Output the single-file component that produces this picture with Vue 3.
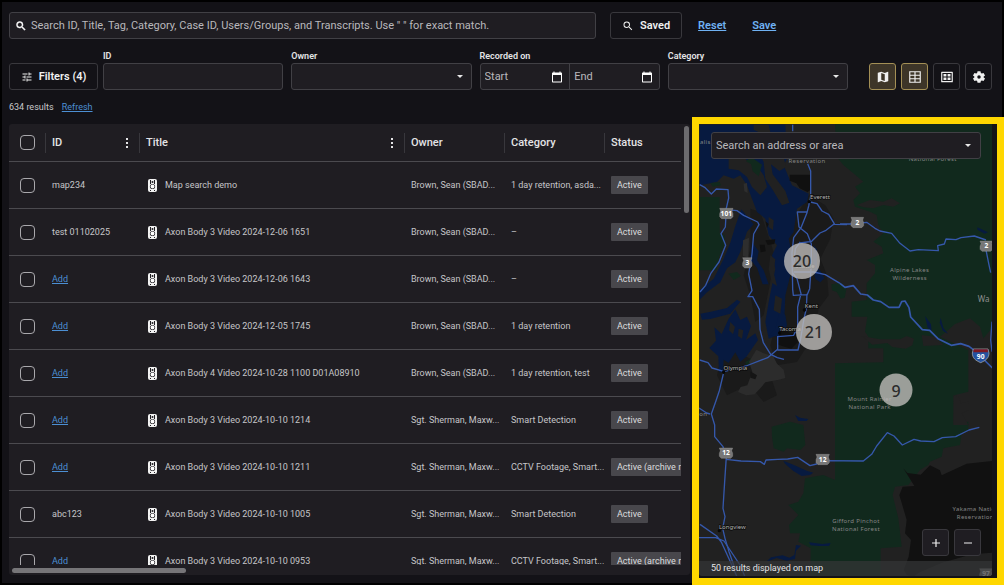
<script setup>
import { ref } from 'vue'

const query = ref('')
const allSelected = ref(false)

const rows = ref([
  { id: 'map234', title: 'Map search demo', owner: 'Brown, Sean (SBAD...', category: '1 day retention, asda...', status: 'Active' },
  { id: 'test 01102025', title: 'Axon Body 3 Video 2024-12-06 1651', owner: 'Brown, Sean (SBAD...', category: '–', status: 'Active' },
  { id: '', title: 'Axon Body 3 Video 2024-12-06 1643', owner: 'Brown, Sean (SBAD...', category: '–', status: 'Active' },
  { id: '', title: 'Axon Body 3 Video 2024-12-05 1745', owner: 'Brown, Sean (SBAD...', category: '1 day retention', status: 'Active' },
  { id: '', title: 'Axon Body 4 Video 2024-10-28 1100 D01A08910', owner: 'Brown, Sean (SBAD...', category: '1 day retention, test', status: 'Active' },
  { id: '', title: 'Axon Body 3 Video 2024-10-10 1214', owner: 'Sgt. Sherman, Maxw...', category: 'Smart Detection', status: 'Active' },
  { id: '', title: 'Axon Body 3 Video 2024-10-10 1211', owner: 'Sgt. Sherman, Maxw...', category: 'CCTV Footage, Smart...', status: 'Active (archive r...' },
  { id: 'abc123', title: 'Axon Body 3 Video 2024-10-10 1005', owner: 'Sgt. Sherman, Maxw...', category: 'Smart Detection', status: 'Active' },
  { id: '', title: 'Axon Body 3 Video 2024-10-10 0953', owner: 'Sgt. Sherman, Maxw...', category: 'CCTV Footage, Smart...', status: 'Active (archive r...' }
])

// centre of each cluster on the map, in px
const clusters = [
  { count: 20, x: 103, y: 137, size: 36 },
  { count: 21, x: 115, y: 208, size: 36 },
  { count: 9, x: 197, y: 266, size: 33 }
]

// x, y are in the units of the map's viewBox
const shields = [
  { n: '101', x: 109, y: 295, w: 40 },
  { n: '2', x: 502, y: 322, w: 38 },
  { n: '2', x: 889, y: 393, w: 38 },
  { n: '3', x: 172, y: 443, w: 28 },
  { n: '12', x: 108, y: 1014, w: 40 },
  { n: '12', x: 398, y: 1033, w: 40 },
  { n: '97', x: 888, y: 1376, w: 38 }
]

const places = [
  { t: 'alis', x: 46, y: 88, park: true },
  { t: 'Reservation', x: 351, y: 144, park: true },
  { t: 'National Forest', x: 728, y: 137, park: true },
  { t: 'Everett', x: 390, y: 253 },
  { t: 'Seattle', x: 345, y: 458 },
  { t: 'Alpine Lakes', x: 659, y: 470, park: true },
  { t: 'Wilderness', x: 659, y: 494, park: true },
  { t: 'Kent', x: 364, y: 578 },
  { t: 'Tacoma', x: 300, y: 647 },
  { t: 'Olympia', x: 136, y: 765 },
  { t: 'Mount Rainier', x: 539, y: 857, park: true },
  { t: 'National Park', x: 539, y: 881, park: true },
  { t: 'on', x: 40, y: 903, park: true },
  { t: 'Longview', x: 127, y: 1242 },
  { t: 'Gifford Pinchot', x: 498, y: 1224, park: true },
  { t: 'National Forest', x: 498, y: 1248, park: true },
  { t: 'Yakama Nation', x: 858, y: 1187, park: true },
  { t: 'Reservation', x: 856, y: 1211, park: true }
]

function toggleAll() {
  rows.value.forEach(r => (r.checked = allSelected.value))
}
</script>

<template>
  <div class="screen">
    <header class="search-row">
      <div class="box search-box">
        <svg class="icon" viewBox="0 0 24 24"><path stroke="currentColor" d="M15.5 14h-.79l-.28-.27A6.471 6.471 0 0 0 16 9.5 6.5 6.5 0 1 0 9.5 16c1.61 0 3.09-.59 4.23-1.57l.27.28v.79l5 4.99L20.49 19l-4.99-5zm-6 0C7.01 14 5 11.99 5 9.5S7.01 5 9.5 5 14 7.01 14 9.5 11.99 14 9.5 14z" /></svg>
        <input v-model="query" type="text" aria-label="Search evidence" placeholder="Search ID, Title, Tag, Category, Case ID, Users/Groups, and Transcripts. Use &quot; &quot; for exact match." />
      </div>
      <button class="btn saved">
        <svg class="icon" viewBox="0 0 24 24"><path d="M15.5 14h-.79l-.28-.27A6.471 6.471 0 0 0 16 9.5 6.5 6.5 0 1 0 9.5 16c1.61 0 3.09-.59 4.23-1.57l.27.28v.79l5 4.99L20.49 19l-4.99-5zm-6 0C7.01 14 5 11.99 5 9.5S7.01 5 9.5 5 14 7.01 14 9.5 11.99 14 9.5 14z" /></svg>
        Saved
      </button>
      <nav class="links">
        <a href="#reset">Reset</a>
        <a href="#save">Save</a>
      </nav>
    </header>

    <section class="filter-row">
      <button class="btn filters">
        <svg class="icon" viewBox="0 0 24 24"><path d="M3 17v2h6v-2H3zM3 5v2h10V5H3zm10 16v-2h8v-2h-8v-2h-2v6h2zM7 9v2H3v2h4v2h2V9H7zm14 4v-2H11v2h10zm-6-4h2V7h4V5h-4V3h-2v6z" /></svg>
        Filters (4)
      </button>
      <div class="fields">
        <div class="field">
          <label for="f-id">ID</label>
          <div class="box"><input id="f-id" type="text" /></div>
        </div>
        <div class="field">
          <label for="f-owner">Owner</label>
          <div class="box">
            <select id="f-owner"><option></option></select>
            <span class="caret"></span>
          </div>
        </div>
        <div class="field">
          <label for="f-start">Recorded on</label>
          <div class="box dates">
            <div class="date">
              <input id="f-start" type="text" placeholder="Start" />
              <svg class="icon" viewBox="0 0 24 24"><path d="M20 3h-1V1h-2v2H7V1H5v2H4c-1.1 0-2 .9-2 2v16c0 1.1.9 2 2 2h16c1.1 0 2-.9 2-2V5c0-1.1-.9-2-2-2zm0 18H4V8h16v13z" /></svg>
            </div>
            <div class="date">
              <input type="text" aria-label="Recorded on, end" placeholder="End" />
              <svg class="icon" viewBox="0 0 24 24"><path d="M20 3h-1V1h-2v2H7V1H5v2H4c-1.1 0-2 .9-2 2v16c0 1.1.9 2 2 2h16c1.1 0 2-.9 2-2V5c0-1.1-.9-2-2-2zm0 18H4V8h16v13z" /></svg>
            </div>
          </div>
        </div>
        <div class="field">
          <label for="f-category">Category</label>
          <div class="box">
            <select id="f-category"><option></option></select>
            <span class="caret"></span>
          </div>
        </div>
      </div>
      <div class="views">
        <button class="btn square on" aria-label="Map view">
          <svg class="icon big" viewBox="0 0 24 24"><path d="M20.5 3l-.16.03L15 5.1 9 3 3.36 4.9c-.21.07-.36.25-.36.48V20.5c0 .28.22.5.5.5l.16-.03L9 18.9l6 2.1 5.64-1.9c.21-.07.36-.25.36-.48V3.5c0-.28-.22-.5-.5-.5zM15 19l-6-2.11V5l6 2.11V19z" /></svg>
        </button>
        <button class="btn square on" aria-label="Table view">
          <svg class="icon big" viewBox="0 0 24 24" fill="none" stroke="currentColor" stroke-width="2"><path d="M3 3h18v18H3zM3 9h18M3 15h18M12 3v18" /></svg>
        </button>
        <button class="btn square" aria-label="Gallery view">
          <svg class="icon big" viewBox="0 0 24 24"><path d="M3 3h18a1 1 0 0 1 1 1v16a1 1 0 0 1-1 1H3a1 1 0 0 1-1-1V4a1 1 0 0 1 1-1zm1 2v14h16V5zM6 7h5v4H6zM13 7h5v4h-5zM6 13h5v4H6zM13 13h5v4h-5z" fill-rule="evenodd" /></svg>
        </button>
        <button class="btn square" aria-label="Settings">
          <svg class="icon big" viewBox="0 0 24 24"><path fill-rule="evenodd" d="M9.5 2h5l.7 3 1.6 1 3-1 2.5 4.3-2.3 2v1.4l2.300 2L19.800 19l-3-1-1.600 1-.7 3h-5l-.7-3-1.600-1-3 1-2.500-4.300 2.300-2v-1.400l-2.300-2L4.200 5l3 1 1.600-1zM12 9a3 3 0 1 0 0 6 3 3 0 0 0 0-6z" /></svg>
        </button>
      </div>
    </section>

    <p class="summary">634 results <a href="#refresh">Refresh</a></p>

    <main class="main">
      <section class="panel">
        <div class="scroller">
          <table>
            <colgroup>
              <col class="c-check" /><col class="c-id" /><col /><col class="c-owner" /><col class="c-category" /><col class="c-status" />
            </colgroup>
            <thead>
              <tr>
                <th><input v-model="allSelected" type="checkbox" aria-label="Select all" @change="toggleAll" /></th>
                <th><div class="head">ID <button class="kebab" aria-label="ID column menu"><i></i><i></i><i></i></button></div></th>
                <th><div class="head">Title <button class="kebab" aria-label="Title column menu"><i></i><i></i><i></i></button></div></th>
                <th><div class="head">Owner</div></th>
                <th><div class="head">Category</div></th>
                <th><div class="head">Status</div></th>
              </tr>
            </thead>
            <tbody>
              <tr v-for="row in rows" :key="row.title">
                <td><input v-model="row.checked" type="checkbox" :aria-label="'Select ' + row.title" /></td>
                <td>
                  <template v-if="row.id">{{ row.id }}</template>
                  <a v-else href="#add">Add</a>
                </td>
                <td>
                  <div class="title">
                    <svg class="device" viewBox="0 0 9 13">
                      <rect width="9" height="13" rx="2" fill="#f2f2f2" />
                      <path d="M2.5 1v4M6.5 1v4" stroke="#1f1d22" />
                      <circle cx="4.5" cy="3" r="1" fill="#1f1d22" />
                      <circle cx="4.5" cy="7.5" r="2.600" fill="#1f1d22" />
                      <circle cx="4.5" cy="7.5" r="1.900" fill="#fff" />
                      <path d="M2.5 11v1M6.5 11v1" stroke="#1f1d22" />
                    </svg>
                    {{ row.title }}
                  </div>
                </td>
                <td>{{ row.owner }}</td>
                <td>{{ row.category }}</td>
                <td><span class="tag">{{ row.status }}</span></td>
              </tr>
            </tbody>
          </table>
          <div class="v-track"><div class="v-thumb"></div></div>
        </div>
        <div class="h-track"><div class="h-thumb"></div></div>
      </section>

      <section class="map-frame">
        <div class="map">
          <svg class="tiles" viewBox="27 27 879 1356" preserveAspectRatio="xMinYMin slice">
            <rect x="27" y="27" width="2000" height="2000" fill="#212121" />

            <!-- west side: sound, peninsula and cities -->
            <g transform="translate(21 21)">
              <path fill="#1a1a1a" d="M335 220l50 30 25 40-10 60-30 60 20 50 5 60-30 40-10 60-30 60-25 40-60 10-20-60 15-60 30-60-10-80 0-120zM160 260l30 10 20 60 20 60-10 90-20 100-25 20-15-80-20-60 20-80z" />
              <path fill="#1a1a1a" d="M80 670l80 40 60 50 20 60-40 20-25-30-45-10-40 20-30-60z" />
              <path fill="#071a40" d="M8 8h257l5 102-10 20 25 60 50 25-5 25-30 20-10 70-15 20 15 70-15 60-10 40-3 70-22 50-25 10-10-50 10-60 10-50 10-50-10-40 15-30-25-30-10-50-25-20-15-40-15-40-20-30-20 10-30-10-20 20-52 10z" />
              <g fill="#071a40">
                <path d="M133 262l37 45-20 22-20 60-15 32-25 18-20 42-40 30-22 22v-28l42-35 30-60 20-48 15-50z" />
                <path d="M10 575l28-5 52-12 30-25 10 6-30 36-60 16-25 2zM165 360l20 28-5 27 20 30 15 42-18 0-17-50-18-22z" />
                <path d="M95 590l20-28 15 32 20-10 12 28-15 42 28-20 8 20-35 50-18 15-15-28-20 32-15-10-2 38-12 0-2-48-27-25 20-22-5-40 22 20zM215 640l20-20 15-60 15 20 5 30-20 35z" />
                <path d="M350 370l10 12 0 55 12 12 10 20-12 12-15-10-8-40z" />
              </g>
              <g fill="#212121">
                <path d="M60 75l30-5 20 20-10 20-30-5zM95 110l35-15 20 20 25 10 25 35 10 35-20 25-25-25-15-30-25-20-30-5z" />
                <path d="M170 8h45l5 22-25 5-25-12zM190 45l40 15 25 25 12 50-20 12-25-20 5 30 38 50 12 35-22 8-30-50-20-30-5-50-20-40z" />
                <path d="M220 400l15 12-5 40 10 40-15-10-10-40zM235 520l20 10-5 45-20-10zM215 285l15 10-2 30-13-10z" />
                <path d="M100 600l14 15-6 22-12-12zM125 620l14 5-4 25-12-8z" />
              </g>
              <path fill="#2e2e2e" d="M140 185l10-2 2 30-10-5zM138 355l18-8-2 60-16-5z" />
              <path fill="#101010" d="M278 158h62v45l-8 8-24-12-10-15-20-8zM205 355l30-3-3 14-20 3zM188 368h15l3 20-15 3zM205 298l10 8-5 12zM248 625l50 10 5 25-20 20-40-12z" />
              <path fill="#11291d" d="M8 225h60v108l15 7 0 28-15 32-10 45H8zM155 110l15 0 25 18-10 35-18-15-5-22-15-8zM40 183l28-3 4 10-25 4zM95 455l25-5 12 12-22 12zM185 45l20-5 22 30-5 25-20-10zM403 487l30-5 15 20-5 25-12 3-12-20-14-5zM145 720l25-15 5 10-28 15z" />
              <path fill="#2c2c2c" d="M178 683l20 10 30 10 12 22 20 18 5 25-20 5-40 8-15 18-17 18-25 3-25-10 8-15 20-5 15-40-10-30z" />
              <path fill="#151515" d="M160 748l20 12-5 12-15-5z" />
            </g>

            <!-- east side: national forests -->
            <g transform="translate(450 105)">
              <path fill="#11291d" d="M-15-80H456V535L430 565 420 530 390 505 345 522 315 548 300 560 340 580 385 600V725L345 735 340 820 385 815V840L365 850 360 885 310 895 305 920 270 935 265 945 240 960 205 1005 165 1010 158 1035 175 1105 185 1190 122 1195V1278H-88V1195L-125 1175-120 1150-150 1150-153 1125-125 1095-155 1065-125 1055-110 1030-105 985-50 975-15 990V640L130 637V595H85V560L75 545 82 500H35V455L80 450V400L105 370V345L80 330 130 310 125 290 100 275 130 250 115 225 110 195 90 185 45 170 40 150 60 130 45 110 70 95 40 70 10 45-10 20z" />
              <g fill="#212121">
                <path d="M50 165l40-15 40 5 25-10 25 15-20 10-30-5-30 10-30-3zM65 558l55 10 60 0 20-10 22 8-5 20-20 10-40-5-15-12-45 5zM245 555l40 5 25 25-60 3z" />
                <path d="M340 735l15 5 8 20 22-5v25l-20 10 20 35-45 0z" />
              </g>
            </g>
            <path fill="#11291d" d="M245 935l55-15 40 10 6 60-15 15-40-5-10 10-30-10-5-35z" />
            <path d="M640 1060l12 14 40 5 28-28 30 15 5 15 75-35 76-8v275l-60 5-90 25-70 30-15 12-20-5-10-15 15-40 7-50-18-20 5-40-22-75 10-25 35-2z" fill="#111" />
            <g fill="#071a40">
              <path d="M280 1037l30 12 40 18 20 6-10 7-25 3-25-15-25-22z" />
              <path d="M357 1282l40 5 25-3-5 9-30 0-25-2zM318 1290l15 2-15 15-3 25-25 5-30-8-32 12 15-14 35-6 20 7 15-8z" />
              <path d="M705 603l18 25 2 20-12-10zM752 608l8 30 14 18-15-8-10-25zM862 337l32 15-10 4-22-12zM315 900l15 8 25 4-5 6-25 0z" />
            </g>

            <!-- roads -->
            <g fill="none" stroke="#3558ab" stroke-width="4" stroke-linejoin="round">
              <g transform="translate(21 21)">
                <path d="M287 8v20M332 125l9 22v75l-6 30-5 20-18 45-22 30-5 45 2 110 2 18 42-2M331 270h-30l5 45 25 20 12 30v60l-5 75-8 20M310 360l-15 20-5 50M285 450l15 20 12 45-10 40 0 60-12 25-48 4M330 515l-2 45-7 30-10 60-8 34h-62M340 240l20 5 15 22 20 10 18 30 37 1M412 305l-25 20-18 8-25 25-35 5" />
                <path d="M242 642v40l-30 25-65 25-67 17M290 450l60 0 35 8 44 26" />
                <path d="M8 188l15 8 20 20 15-15 35 2 2 25-8 35 33 3 20 14 42 20 4 8-16 28-5 60-10 60 10 50-12 18 14 0 20 38 2 60 10 40 22 35 20 10 20 5M87 280l-2 35-13 20 14 35-20 50-25 35-15 35-17 20M8 714l25 8 12 16 35 10" />
              </g>
              <path transform="translate(450 105)" d="M0 222h30l50-5 25 18 15 8 35 7 25 30 30 23 25-4 60 3-2-15 20-5 5-15 30 2 15-6 40-5 35 12M438 300l8 40 6 28M456 515l-4 55 4 35" />
              <path transform="translate(450 105)" stroke-width="5" d="M0 400l15 12 25-5 22 25 20 3 18 15 22 5 25 17 30 0 8-17 10-2 12 20 5 28 35 38 22 2 25 25 40 20 28-5 25 8 20 15 35 35 15 15" />
              <path d="M100 777l-12 50-10 30-14 40 10 33v35l25 30 10 30-5 75-5 80 6 25-7 35 7 30 12 40 15 43M60 897l-10-3-23-15M108 1033l45 5 58 2 12 8 5-13 35-2 30-1 30-5 37 25 20-5 20-10 120 1 25-20 15-25 32-40 20 10 25 27 35-17 20 5 40 2 25-12 40-3 40-20 31-8" />
              <path d="M27 1268h50l25 10 20 30 30 45 12 30M30 1228l50 35 15 20 25 55 20 45" />
            </g>

            <g class="shield" v-for="(s, i) in shields" :key="i">
              <path :d="`M${s.x - s.w / 2} ${s.y - 15}h${s.w}l-3 8 3 8v9l-6 6h${12 - s.w}l-6-6v-9l3-8z`" />
              <text :x="s.x" :y="s.y + 7">{{ s.n }}</text>
            </g>
            <g class="interstate">
              <path d="M850 702h44l3 12c0 15-9 22-25 29-16-7-25-14-25-29z" fill="#2452a0" stroke="#b9b9b9" stroke-width="2" />
              <path d="M851 703h42l1 9h-44z" fill="#7d1822" />
              <text x="872" y="732">90</text>
            </g>

            <g fill="#070707">
              <circle cx="358" cy="260" r="5" /><circle cx="343" cy="585" r="5" /><circle cx="269" cy="654" r="5" />
              <circle cx="101" cy="771" r="5" /><circle cx="88" cy="1247" r="5" />
            </g>
            <text v-for="(p, i) in places" :key="'p' + i" :x="p.x" :y="p.y" :class="p.park ? 'park' : 'city'">{{ p.t }}</text>
            <text x="881" y="562" class="state">Wa</text>
          </svg>

          <button
            v-for="c in clusters"
            :key="c.count"
            class="cluster"
            :style="{ left: c.x + 'px', top: c.y + 'px', width: c.size + 'px', height: c.size + 'px' }"
          >{{ c.count }}</button>

          <div class="box map-search">
            <input type="text" aria-label="Search an address or area" placeholder="Search an address or area" />
            <span class="caret"></span>
          </div>

          <div class="zoom">
            <button class="btn square" aria-label="Zoom in"><svg class="icon big" viewBox="0 0 14 14"><path d="M6.4 3h1.2v3.4H11v1.200H7.600V11H6.400V7.600H3V6.400h3.400z" /></svg></button>
            <button class="btn square" aria-label="Zoom out"><svg class="icon big" viewBox="0 0 14 14"><path d="M3 6.400h8v1.200H3z" /></svg></button>
          </div>

          <div class="map-status">50 results displayed on map</div>
        </div>
      </section>
    </main>
  </div>
</template>

<style>
body {
  margin: 0;
  background: #000;
}
</style>

<style scoped>
* {
  box-sizing: border-box;
}

.screen {
  display: flex;
  flex-direction: column;
  height: 100vh;
  padding: 12px 12px 0 9px;
  background: #131217;
  box-shadow: inset 0 0 0 2px #000;
  color: #e4e4e6;
  font-family: Roboto, "Noto Sans", sans-serif;
  font-size: 9px;
  overflow: hidden;
}

a {
  color: #4c8fd3;
}

button,
input,
select {
  font: inherit;
  color: inherit;
}

.icon {
  width: 12px;
  height: 12px;
  fill: currentColor;
  flex: none;
}

.icon.big {
  width: 14px;
  height: 14px;
}

.icon[fill="none"] {
  fill: none;
}

/* inputs */
.box {
  display: flex;
  align-items: center;
  position: relative;
  height: 27px;
  background: #1f1d22;
  border: 1px solid #414045;
  border-radius: 3px;
  font-size: 11px;
}

.box input,
.box select {
  flex: 1;
  width: 100%;
  min-width: 0;
  height: 100%;
  padding: 0 4px;
  border: 0;
  background: none;
  outline: none;
  appearance: none;
}

.box input::placeholder {
  color: #b9b8bc;
  opacity: 1;
}

.caret {
  position: absolute;
  right: 8px;
  border: 3px solid transparent;
  border-top-color: #e8e8e8;
  border-bottom: 0;
  pointer-events: none;
}

.btn {
  display: flex;
  align-items: center;
  justify-content: center;
  gap: 6px;
  height: 27px;
  padding: 0 11px;
  background: #131217;
  border: 1px solid #39383d;
  border-radius: 3px;
  color: #f0f0f0;
  font-size: 11px;
  font-weight: 600;
  white-space: nowrap;
  cursor: pointer;
}

.btn.square {
  width: 27px;
  padding: 0;
}

.btn.on {
  background: #3d3528;
  border-color: #a38f55;
}

/* top rows */
.search-row {
  display: flex;
  align-items: center;
}

.search-box {
  flex: 0 1 587px;
  padding-left: 5px;
  color: #fff;
}

.saved {
  min-width: 71px;
  margin-left: 14px;
}

.links {
  display: flex;
  gap: 26px;
  margin-left: 16px;
  font-size: 11px;
  font-weight: 600;
}

.links a {
  color: #6fb1f2;
}

.filter-row {
  display: flex;
  align-items: flex-end;
  margin-top: 10px;
}

.filters {
  width: 89px;
  margin-right: 5px;
}

.fields {
  display: flex;
  flex: 1;
  gap: 8px;
}

.field {
  flex: 1 1 0;
  min-width: 0;
}

.field label {
  display: block;
  height: 14px;
  line-height: 14px;
  font-weight: 600;
}

.date {
  display: flex;
  align-items: center;
  flex: 1;
  min-width: 0;
  height: 100%;
  padding-right: 6px;
}

.date + .date {
  border-left: 1px solid #414045;
}

.date .icon {
  color: #fff;
}

.views {
  display: flex;
  gap: 5px;
  margin-left: 21px;
}

.summary {
  margin: 10px 0 0;
  line-height: 14px;
  color: #c9c9cc;
}

.summary a {
  margin-left: 6px;
}

/* table */
.main {
  display: grid;
  grid-template-columns: minmax(0, 1fr) 312px;
  gap: 2px;
  flex: 1;
  min-height: 0;
  margin: 3px -12px 0 0;
}

.panel {
  display: flex;
  flex-direction: column;
  min-height: 0;
  margin: 7px 0 10px;
  background: #1f1d22;
  border-radius: 3px;
}

.scroller {
  display: flex;
  flex: 1;
  min-height: 0;
  overflow: hidden;
}

table {
  flex: 1;
  width: 100%;
  min-width: 0;
  height: max-content;
  table-layout: fixed;
  border-collapse: separate;
  border-spacing: 0;
}

.c-check {
  width: 36px;
}

.c-id {
  width: 94px;
}

.c-owner,
.c-category {
  width: 100px;
}

.c-status {
  width: 77px;
}

th,
td {
  padding: 0 0 0 7px;
  border-bottom: 1px solid #4b4a4f;
  text-align: left;
  white-space: nowrap;
  overflow: hidden;
}

th:first-child,
td:first-child {
  padding-left: 11px;
}

th {
  height: 38px;
  font-size: 11px;
  font-weight: 500;
}

th:not(:first-child) {
  padding-left: 0;
}

td {
  height: 47px;
  color: #c6c6c9;
}

.head {
  display: flex;
  align-items: center;
  justify-content: space-between;
  height: 20px;
  padding: 0 9px 0 6px;
  border-left: 1px solid #38373c;
}

.kebab {
  display: flex;
  flex-direction: column;
  gap: 2px;
  padding: 0 2px;
  border: 0;
  background: none;
}

.kebab i {
  width: 2px;
  height: 2px;
  background: #e4e4e6;
}

input[type="checkbox"] {
  display: block;
  width: 15px;
  height: 15px;
  margin: 0;
  appearance: none;
  border: 1px solid #a9a8ac;
  border-radius: 4px;
}

input[type="checkbox"]:checked {
  background: #6fb1f2;
}

.title {
  display: flex;
  align-items: center;
  gap: 8px;
  padding-left: 2px;
}

.device {
  width: 9px;
  height: 13px;
}

.tag {
  display: inline-block;
  padding: 0 6px;
  line-height: 18px;
  background: #48474c;
  border-radius: 1px;
  color: #dcdcde;
}

.v-track {
  flex: none;
  width: 9px;
  padding: 2px 1px 0 3px;
}

.v-thumb {
  height: 87px;
  background: #6c6b6e;
  border-radius: 3px;
}

.h-track {
  height: 10px;
  padding: 3px 9px 2px 3px;
}

.h-thumb {
  width: 26%;
  height: 5px;
  background: #767578;
  border-radius: 3px;
}

/* map */
.map-frame {
  min-height: 0;
  padding: 0 5px 2px 0;
  border: 7px solid #ffd700;
  background: #131217;
}

.map {
  position: relative;
  height: 100%;
  overflow: hidden;
  border-radius: 0 0 3px 3px;
}

.tiles {
  display: block;
  width: 100%;
  height: 100%;
}

.tiles text {
  font-family: "Noto Sans", sans-serif;
  text-anchor: middle;
  font-size: 18px;
}

.tiles .park {
  fill: #858585;
  letter-spacing: 1px;
}

.tiles .city {
  fill: #b5b5b5;
  stroke: #0b0b0b;
  stroke-width: 4px;
  paint-order: stroke;
}

.tiles .state {
  fill: #8f8f8f;
  font-size: 24px;
}

.shield path {
  fill: #777;
  stroke: #a0a0a0;
  stroke-width: 1px;
}

.tiles .shield text,
.tiles .interstate text {
  fill: #fff;
  font-size: 20px;
  font-weight: 700;
}

.cluster {
  position: absolute;
  transform: translate(-50%, -50%);
  padding: 0;
  border: 0;
  border-radius: 50%;
  background: rgba(190, 187, 185, 0.8);
  color: #2c2c2c;
  font-family: "Noto Sans", sans-serif;
  font-size: 16px;
  font-weight: 500;
}

.map-search {
  position: absolute;
  top: 8px;
  left: 12px;
  right: 11px;
}

.map-search .caret {
  right: 9px;
}

.zoom {
  position: absolute;
  right: 11px;
  bottom: 20px;
  display: flex;
  gap: 5px;
}

.zoom .btn {
  background: #1f1d22;
}

.map-status {
  position: absolute;
  left: 0;
  right: 0;
  bottom: 0;
  padding-left: 12px;
  line-height: 15px;
  background: rgba(52, 54, 55, 0.7);
}
</style>
